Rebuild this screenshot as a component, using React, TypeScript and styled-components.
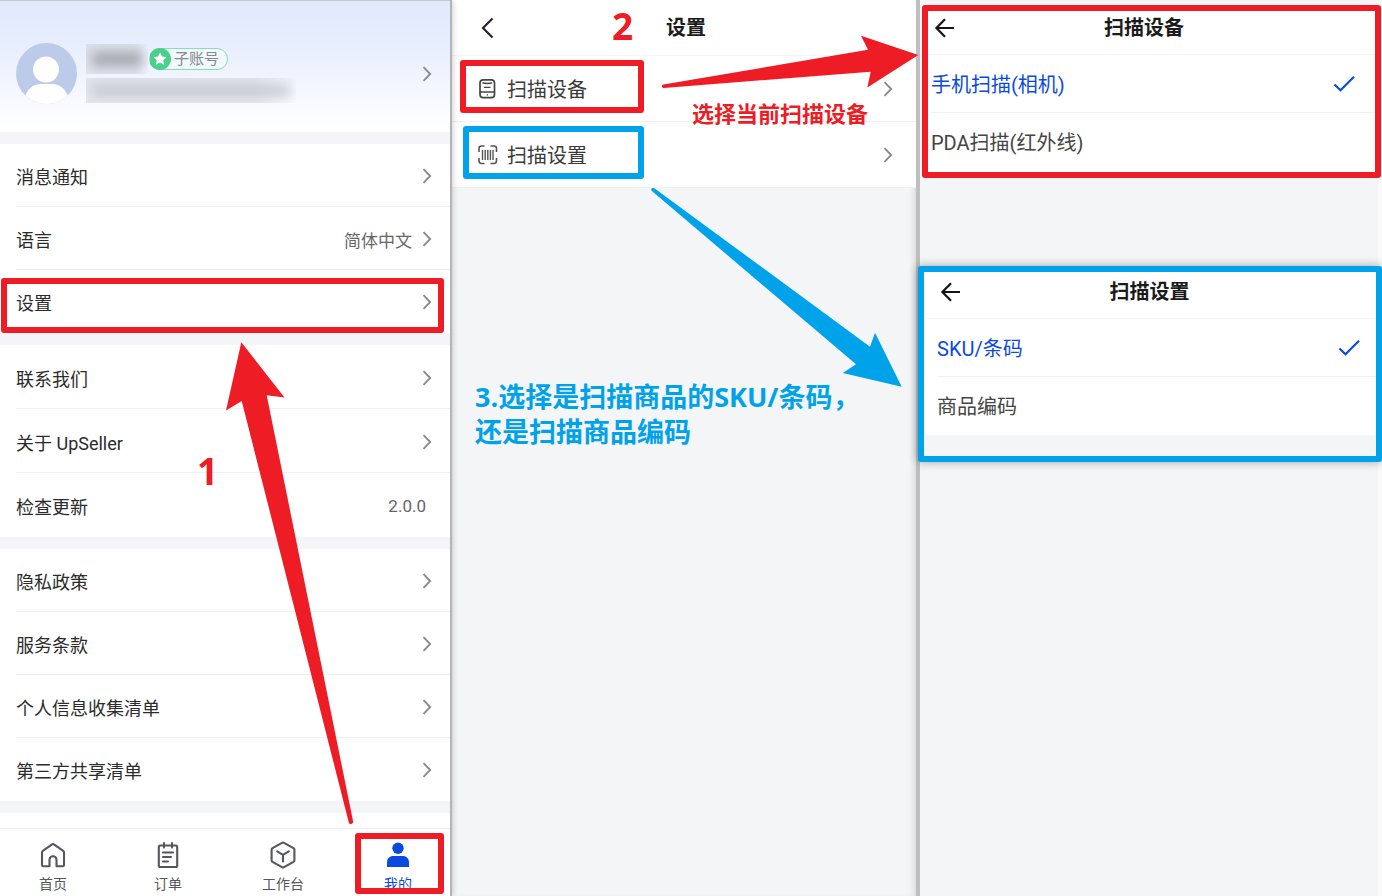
import React from "react";
import styled, { createGlobalStyle } from "styled-components";

const RED = "#ee1c25";
const BLUE = "#00a2ea";
const PRIMARY = "#0b4ae0";

const GlobalStyle = createGlobalStyle`
  *, *::before, *::after { box-sizing: border-box; }
  body {
    margin: 0;
    background: #f4f5f7;
    color: #2b2b2b;
    font-family: Roboto, "Noto Sans CJK SC", sans-serif;
  }
  a { color: inherit; text-decoration: none; }
  button { font: inherit; color: inherit; background: none; border: 0; padding: 0; cursor: pointer; }
`;

const Page = styled.main`
  display: grid;
  grid-template-columns: 452fr 468fr 462fr;
  min-height: 100vh;
`;

/* ---------- shared annotation parts ---------- */

const Frame = styled.span<{ $color: string }>`
  position: absolute;
  border: 6px solid ${(p) => p.$color};
  border-radius: 3px;
  pointer-events: none;
  z-index: 2;
`;

const Arrow = styled.svg<{ $x: number; $y: number }>`
  position: absolute;
  left: ${(p) => p.$x}px;
  top: ${(p) => p.$y}px;
  pointer-events: none;
  z-index: 3;
`;

const Note = styled.p<{ $x: number; $y: number; $size: number; $color: string }>`
  position: absolute;
  left: ${(p) => p.$x}px;
  top: ${(p) => p.$y}px;
  margin: 0;
  color: ${(p) => p.$color};
  font-family: "Open Sans", "Noto Sans CJK SC", sans-serif;
  font-size: ${(p) => p.$size}px;
  font-weight: 700;
  line-height: 35px;
  white-space: nowrap;
  z-index: 3;
`;

/* ---------- profile screen ---------- */

const ProfileScreen = styled.section`
  position: relative;
  display: flex;
  flex-direction: column;
  border-right: 2px solid #b4b4b6;
  background: #fff;
  box-shadow: 1px 0 6px rgba(0, 0, 0, 0.18);
  z-index: 1;
`;

const Profile = styled.a`
  display: flex;
  align-items: flex-start;
  height: 132px;
  padding: 42px 18px 0 16px;
  border-top: 1px solid #c6c9d4;
  background: linear-gradient(#e1e9fb, #e9effd 40%, #fbfcff 85%, #fff);
`;

const ProfileInfo = styled.div`
  display: flex;
  flex: 1;
  flex-direction: column;
  gap: 4px;
  margin: 1px 0 0 9px;
`;

const NameLine = styled.div`
  display: flex;
  align-items: center;
  gap: 1px;
`;

const Masked = styled.span<{ $width: number; $height: number; $tone: string }>`
  display: block;
  width: ${(p) => p.$width}px;
  height: ${(p) => p.$height}px;
  padding: 8px 6px;
  overflow: hidden;
  background: linear-gradient(90deg, rgba(208, 211, 219, 0.5) 80%, rgba(208, 211, 219, 0));

  &::before {
    content: "";
    display: block;
    height: 100%;
    background: ${(p) => p.$tone};
    filter: blur(6px);
  }
`;

const Badge = styled.span`
  display: flex;
  align-items: center;
  gap: 3px;
  height: 22px;
  padding-right: 8px;
  border: 1px solid #86dfb0;
  border-radius: 11px;
  background: #f1f9fb;
  color: #85888c;
  font-size: 15px;
  line-height: 20px;
`;

const ChevronBox = styled.svg`
  flex: none;
  width: 10px;
  height: 16px;
`;

const ProfileChevron = styled.span`
  display: flex;
  margin-top: 23px;
`;

const Group = styled.nav<{ $row: number }>`
  display: flex;
  flex-direction: column;
  border-top: 12px solid #f4f5f7;

  > a {
    height: ${(p) => p.$row}px;
  }
`;

const MenuRow = styled.a`
  position: relative;
  display: flex;
  align-items: center;
  gap: 10px;
  margin-left: 16px;
  padding: 2px 18px 0 0;
  border-bottom: 1px solid #f0f1f3;
  font-size: 18px;

  &:last-child { border-bottom-color: transparent; }
`;

const MenuLabel = styled.span`
  flex: 1;
`;

const MenuValue = styled.span<{ $edge?: boolean }>`
  margin-right: ${(p) => (p.$edge ? 6 : 0)}px;
  color: #666;
  font-size: 17px;
`;

const RowFrame = styled(Frame)`
  inset: 8px 6px -1px -15px;
`;

const TabBar = styled.nav`
  display: flex;
  justify-content: space-between;
  height: 68px;
  margin-top: auto;
  padding: 0 8px 0 9px;
  border-top: 1px solid #eceef0;
`;

const TabGap = styled.div`
  height: 12px;
  background: #f4f5f7;
`;

const Tab = styled.a<{ $active?: boolean }>`
  position: relative;
  display: flex;
  flex-direction: column;
  align-items: center;
  gap: 4px;
  width: 88px;
  padding-top: 12px;
  color: ${(p) => (p.$active ? PRIMARY : "#55575b")};
  font-size: 14px;
  line-height: 22px;
`;

const TabFrame = styled(Frame)`
  inset: 4px -2px 2px 1px;
`;

/* ---------- settings screen ---------- */

const SettingsScreen = styled.section`
  position: relative;
  border-right: 4px solid #bfbfc0;
  box-shadow: inset -6px 0 6px -4px rgba(0, 0, 0, 0.12);
`;

const SettingsHeader = styled.header`
  display: grid;
  grid-template-columns: 24px 1fr 24px;
  align-items: center;
  height: 56px;
  padding: 0 20px 0 24px;
  border-bottom: 1px solid #f3f4f5;
  background: #fff;
`;

const Title = styled.h1`
  margin: 0;
  color: #1b1b1b;
  font-size: 20px;
  font-weight: 700;
  line-height: 32px;
  text-align: center;
`;

const IconButton = styled.button`
  display: flex;
`;

const SettingsRow = styled.a`
  position: relative;
  display: flex;
  align-items: center;
  gap: 9px;
  height: 66px;
  padding: 0 23px 0 23px;
  border-bottom: 1px solid #f0f1f3;
  background: #fff;
  font-size: 20px;
  color: #3a3a3a;
`;

const SettingsFrame = styled(Frame)<{ $start: number }>`
  inset: 4px auto 8px ${(p) => p.$start}px;
  width: ${(p) => 192 - p.$start}px;
`;

/* ---------- choice panels ---------- */

const ChoiceScreen = styled.section`
  padding: 5px 1px 0 2px;
  box-shadow: inset -4px 0 #fafafb;
`;

const ChoicePanel = styled.form<{ $color: string }>`
  position: relative;
  padding-bottom: 1px;
  border: 6px solid ${(p) => p.$color};
  border-radius: 3px;
  background: #fff;
`;

const RaisedPanel = styled(ChoicePanel)`
  margin: 88px -1px 0 -4px;
  padding-bottom: 21px;
  background: #f4f5f7;
  box-shadow: 0 0 10px rgba(0, 0, 0, 0.35);
`;

const ChoiceHeader = styled.header<{ $top: number; $start: number; $end: number }>`
  display: grid;
  grid-template-columns: 24px 1fr 24px;
  align-items: center;
  padding: ${(p) => `${p.$top}px ${p.$end - 2}px 10px ${p.$start}px`};
  border-bottom: 1px solid #f3f4f5;
  background: #fff;
`;

const Choices = styled.div<{ $start: number }>`
  padding-left: ${(p) => p.$start}px;
  background: #fff;
`;

const Check = styled.svg`
  display: none;
`;

const Choice = styled.label<{ $end: number }>`
  display: flex;
  align-items: center;
  justify-content: space-between;
  height: 58px;
  padding-right: ${(p) => p.$end}px;
  border-bottom: 1px solid #f0f1f3;
  color: #444;
  font-size: 20px;
  cursor: pointer;

  &:last-child { border-bottom-color: transparent; }
  &:has(input:checked) { color: ${PRIMARY}; }
  &:has(input:checked) ${Check} { display: block; }
`;

const HiddenRadio = styled.input`
  position: absolute;
  width: 1px;
  height: 1px;
  margin: 0;
  opacity: 0;
`;

/* ---------- icons ---------- */

const Chevron = () => (
  <ChevronBox viewBox="0 0 10 16" fill="none" stroke="#85878b" strokeWidth="1.8" aria-hidden="true">
    <path d="M1.500 1.200 8.200 8l-6.700 6.800" />
  </ChevronBox>
);

const BackArrow = () => (
  <svg width="24" height="24" viewBox="0 0 24 24" fill="none" stroke="#151515" strokeWidth="2.200" aria-hidden="true">
    <path d="M23 12H5.500M14 3.200 5.400 12l8.600 8.800" />
  </svg>
);

const Avatar = () => (
  <svg width="61" height="61" viewBox="0 0 61 61" aria-hidden="true">
    <defs>
      <clipPath id="avatar-clip"><circle cx="30.5" cy="30.5" r="30.5" /></clipPath>
    </defs>
    <g clipPath="url(#avatar-clip)">
      <rect width="61" height="61" fill="#bccbea" />
      <circle cx="30" cy="26.500" r="13" fill="#fff" />
      <path d="M8 56c3-10 9-15 17-15h11c8 0 14 5 17 15v6H8z" fill="#fff" />
    </g>
  </svg>
);

const StarIcon = () => (
  <svg width="21" height="22" viewBox="0 0 21 22" aria-hidden="true">
    <circle cx="10" cy="11" r="11" fill="#4bcf8c" />
    <path d="m10 4.500 2 4.100 4.500.600-3.300 3.100.900 4.500-4.100-2.200-4.100 2.200.900-4.500-3.300-3.100 4.500-.600z" fill="#fff" />
  </svg>
);

const HomeIcon = () => (
  <svg width="28" height="28" viewBox="0 0 28 28" fill="none" stroke="currentColor" strokeWidth="2.100" strokeLinejoin="round" aria-hidden="true">
    <path d="M10.500 25.300H4.200c-.8 0-1.200-.4-1.200-1.200V11.400c0-.7.200-1.100.8-1.500l9.300-6.600c.6-.4 1.200-.4 1.800 0l9.300 6.600c.6.4.8.8.8 1.500v12.700c0 .8-.4 1.200-1.200 1.200h-6.300v-6.500c0-2-1.400-3.500-3.500-3.500s-3.500 1.500-3.500 3.500z" />
  </svg>
);

const OrderIcon = () => (
  <svg width="28" height="28" viewBox="0 0 28 28" fill="none" stroke="currentColor" strokeWidth="2.100" strokeLinecap="round" strokeLinejoin="round" aria-hidden="true">
    <rect x="4.800" y="4.500" width="18.400" height="21.500" rx="1.500" />
    <path d="M10 2v4.500M18 2v4.500M9 11.500h10M9 16h8M9 20.500h5" />
  </svg>
);

const WorkIcon = () => (
  <svg width="28" height="28" viewBox="0 0 28 28" fill="none" stroke="currentColor" strokeWidth="2.100" strokeLinejoin="round" strokeLinecap="round" aria-hidden="true">
    <path d="M13 1.800c.6-.4 1.400-.4 2 0l9.500 5.300c.600.400.900.900.900 1.600v10.600c0 .700-.300 1.200-.900 1.600L15 26.200c-.600.400-1.400.400-2 0l-9.500-5.300c-.600-.400-.900-.900-.900-1.600V8.700c0-.700.300-1.200.900-1.600z" />
    <path d="m8.200 10.300 5.800 3.600 5.800-3.600M14 13.900v6.600" />
  </svg>
);

const MineIcon = () => (
  <svg width="28" height="28" viewBox="0 0 28 28" fill="currentColor" aria-hidden="true">
    <circle cx="14" cy="7.300" r="5.700" />
    <path d="M3 26v-4.500c0-4 2.600-6.500 6.500-6.500h9c3.900 0 6.500 2.500 6.500 6.500V26z" />
  </svg>
);

const DeviceIcon = () => (
  <svg width="23" height="24" viewBox="0 0 23 24" fill="none" stroke="#444" strokeWidth="1.700" aria-hidden="true">
    <rect x="5" y="2.800" width="14.500" height="17.800" rx="3.200" />
    <path d="M5 15h14.500M7.500 5.800c2 .900 7.500.900 9.500 0" />
    <path d="M9 10.300h6.500M11.800 17.800h1.200" strokeWidth="1.300" />
  </svg>
);

const BarcodeIcon = () => (
  <svg width="23" height="24" viewBox="0 0 23 24" fill="none" stroke="#555" strokeWidth="1.600" aria-hidden="true">
    <path d="M9.500 3H6.500C5 3 4 4 4 5.500V9M15.500 3h3.500C20.500 3 21.500 4 21.500 5.500V9M4 15v2.500C4 19.500 5 20.500 6.500 20.500h3M21.500 15v2.500c0 2-1 3-2.500 3h-3.500" />
    <path d="M7.500 7v10M10.200 7v10M12.800 7v10M15.400 7v10M18 7v10" strokeWidth="1.400" />
  </svg>
);

/* ---------- content ---------- */

interface MenuItem {
  label: string;
  value?: string;
  plain?: boolean;
  framed?: boolean;
}

const groups: { row: number; items: MenuItem[] }[] = [
  { row: 63, items: [{ label: "消息通知" }, { label: "语言", value: "简体中文" }, { label: "设置", framed: true }] },
  { row: 64, items: [{ label: "联系我们" }, { label: "关于 UpSeller" }, { label: "检查更新", value: "2.0.0", plain: true }] },
  { row: 63, items: [{ label: "隐私政策" }, { label: "服务条款" }, { label: "个人信息收集清单" }, { label: "第三方共享清单" }] },
];

const tabs = [
  { label: "首页", icon: <HomeIcon /> },
  { label: "订单", icon: <OrderIcon /> },
  { label: "工作台", icon: <WorkIcon /> },
  { label: "我的", icon: <MineIcon />, active: true },
];

interface ChoiceBodyProps {
  title: string;
  name: string;
  options: string[];
  top: number;
  start: number;
  end: number;
}

function ChoiceBody({ title, name, options, top, start, end }: ChoiceBodyProps) {
  return (
    <>
      <ChoiceHeader $top={top} $start={start} $end={end}>
        <IconButton type="button" aria-label="返回"><BackArrow /></IconButton>
        <Title>{title}</Title>
      </ChoiceHeader>
      <Choices $start={start}>
        {options.map((option, i) => (
          <Choice key={option} $end={end}>
            <HiddenRadio type="radio" name={name} defaultChecked={i === 0} />
            {option}
            <Check width="22" height="18" viewBox="0 0 22 18" fill="none" stroke={PRIMARY} strokeWidth="2.200" aria-hidden="true">
              <path d="m1.500 9.500 6 5.800L21 1.800" />
            </Check>
          </Choice>
        ))}
      </Choices>
    </>
  );
}

export default function App() {
  return (
    <>
      <GlobalStyle />
      <Page>
        <ProfileScreen>
          <Profile href="#profile" aria-label="账号">
            <Avatar />
            <ProfileInfo>
              <NameLine>
                <Masked $width={62} $height={30} $tone="#a3a6ad" />
                <Badge><StarIcon />子账号</Badge>
              </NameLine>
              <Masked $width={210} $height={25} $tone="#bfc2c9" />
            </ProfileInfo>
            <ProfileChevron><Chevron /></ProfileChevron>
          </Profile>
          {groups.map((group, i) => (
            <Group key={i} $row={group.row}>
              {group.items.map((item) => (
                <MenuRow key={item.label} href="#menu">
                  <MenuLabel>{item.label}</MenuLabel>
                  {item.value && <MenuValue $edge={item.plain}>{item.value}</MenuValue>}
                  {!item.plain && <Chevron />}
                  {item.framed && <RowFrame $color={RED} />}
                </MenuRow>
              ))}
            </Group>
          ))}
          <TabGap />
          <TabBar>
            {tabs.map((tab) => (
              <Tab key={tab.label} href="#tab" $active={tab.active}>
                {tab.icon}
                {tab.label}
                {tab.active && <TabFrame $color={RED} />}
              </Tab>
            ))}
          </TabBar>
          <Note $x={197} $y={453} $size={37} $color={RED}>1</Note>
          <Arrow $x={220} $y={340} width="140" height="490" viewBox="220 340 140 490" fill={RED} aria-hidden="true">
            <path d="M241.300 342.300 284.500 397.500 266.700 395.300 353 821a2.100 2.100 0 0 1-4.200 1.500L241.700 401 226 410.500z" />
          </Arrow>
        </ProfileScreen>

        <SettingsScreen>
          <SettingsHeader>
            <IconButton type="button" aria-label="返回">
              <svg width="24" height="24" viewBox="0 0 24 24" fill="none" stroke="#2a2230" strokeWidth="2.200" aria-hidden="true">
                <path d="M16.500 2.500 7 12l9.500 9.500" />
              </svg>
            </IconButton>
            <Title>设置</Title>
          </SettingsHeader>
          <SettingsRow href="#device">
            <DeviceIcon />
            <MenuLabel>扫描设备</MenuLabel>
            <Chevron />
            <SettingsFrame $color={RED} $start={8} />
          </SettingsRow>
          <SettingsRow href="#scan">
            <BarcodeIcon />
            <MenuLabel>扫描设置</MenuLabel>
            <Chevron />
            <SettingsFrame $color={BLUE} $start={11} />
          </SettingsRow>
          <Note $x={160} $y={8} $size={37} $color={RED}>2</Note>
          <Note $x={240} $y={96} $size={22} $color={RED}>选择当前扫描设备</Note>
          <Note $x={23} $y={379} $size={27} $color={BLUE}>
            3.选择是扫描商品的SKU/条码，
            <br />
            还是扫描商品编码
          </Note>
          <Arrow $x={208} $y={30} width="260" height="64" viewBox="660 30 260 64" fill={RED} aria-hidden="true">
            <path d="M918.300 55 861 35.700 868 49.700 663.500 84.500a1.700 1.700 0 0 0 .200 3.400L870.700 71.700 867.300 87.500z" />
          </Arrow>
          <Arrow $x={196} $y={184} width="256" height="206" viewBox="648 184 256 206" fill={BLUE} aria-hidden="true">
            <path d="M901.700 386.700 875 332.700 870 346.700 654 188a1.900 1.900 0 0 0-2.400 2.800L856 364.300 842.700 373z" />
          </Arrow>
        </SettingsScreen>

        <ChoiceScreen>
          <ChoicePanel $color={RED}>
            <ChoiceBody title="扫描设备" name="device" options={["手机扫描(相机)", "PDA扫描(红外线)"]} top={1} start={3} end={20} />
          </ChoicePanel>
          <RaisedPanel $color={BLUE}>
            <ChoiceBody title="扫描设置" name="content" options={["SKU/条码", "商品编码"]} top={4} start={13} end={16} />
          </RaisedPanel>
        </ChoiceScreen>
      </Page>
    </>
  );
}
